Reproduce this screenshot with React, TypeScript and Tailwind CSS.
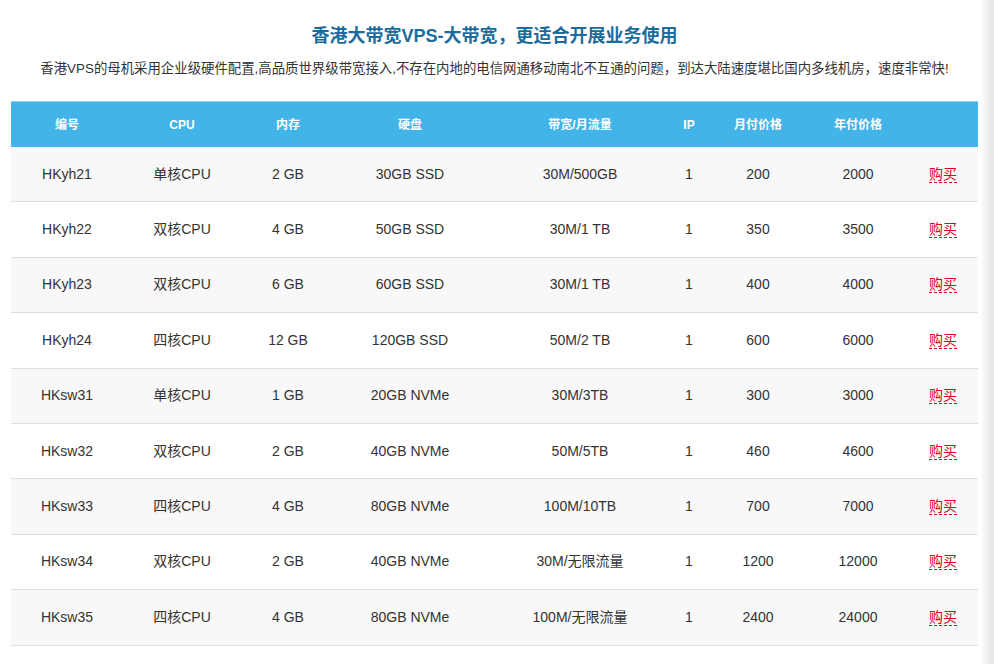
const rows = [
  ["HKyh21","单核CPU","2 GB","30GB SSD","30M/500GB","1","200","2000"],
  ["HKyh22","双核CPU","4 GB","50GB SSD","30M/1 TB","1","350","3500"],
  ["HKyh23","双核CPU","6 GB","60GB SSD","30M/1 TB","1","400","4000"],
  ["HKyh24","四核CPU","12 GB","120GB SSD","50M/2 TB","1","600","6000"],
  ["HKsw31","单核CPU","1 GB","20GB NVMe","30M/3TB","1","300","3000"],
  ["HKsw32","双核CPU","2 GB","40GB NVMe","50M/5TB","1","460","4600"],
  ["HKsw33","四核CPU","4 GB","80GB NVMe","100M/10TB","1","700","7000"],
  ["HKsw34","双核CPU","2 GB","40GB NVMe","30M/无限流量","1","1200","12000"],
  ["HKsw35","四核CPU","4 GB","80GB NVMe","100M/无限流量","1","2400","24000"],
];
const heads = ["编号","CPU","内存","硬盘","带宽/月流量","IP","月付价格","年付价格",""];
const widths = ["w-[112px]","w-[118px]","w-[94px]","w-[150px]","w-[190px]","w-[28px]","w-[110px]","w-[90px]","w-[75px]"];

export default function App() {
  return (
    <div className="relative h-[664px] w-[994px] overflow-hidden bg-white" style={{fontFamily:'"Liberation Sans","Noto Sans CJK SC",sans-serif'}}>
      <div className="absolute right-0 top-0 h-full w-[14px] bg-gradient-to-r from-white via-[#f0f0f0] to-[#e6e6e6]" />
      <div className="w-[967px] ml-[11px]">
        <h1 className="pt-[23px] text-center text-[18px] font-bold leading-[26px] text-[#1b6c9c]">香港大带宽VPS-大带宽，更适合开展业务使用</h1>
        <p className="mt-[10px] text-center text-[13.4px] leading-[20px] text-[#333] whitespace-nowrap">香港VPS的母机采用企业级硬件配置,高品质世界级带宽接入,不存在内地的电信网通移动南北不互通的问题，到达大陆速度堪比国内多线机房，速度非常快!</p>
        <div className="mt-[22px]">
          <div className="flex h-[46px] items-center bg-[#42b4e8] border-t border-[#8fd3f2] text-[12px] font-bold text-white">
            {heads.map((h,i)=>(<div key={i} className={`${widths[i]} shrink-0 text-center`}>{h}</div>))}
          </div>
          {rows.map((r,ri)=>(
            <div key={ri} className={`flex h-[55.4px] items-center border-b border-[#dddddd] text-[14px] text-[#333] ${ri%2===0?"bg-[#f8f8f8]":"bg-white"}`}>
              {r.map((c,i)=>(<div key={i} className={`${widths[i]} shrink-0 text-center`}>{c}</div>))}
              <div className={`${widths[8]} shrink-0 pl-[5px] text-center`}>
                <span className="text-[#e00020] border-b border-dashed border-[#e00020] leading-[16px]">购买</span>
              </div>
            </div>
          ))}
        </div>
      </div>
    </div>
  );
}
